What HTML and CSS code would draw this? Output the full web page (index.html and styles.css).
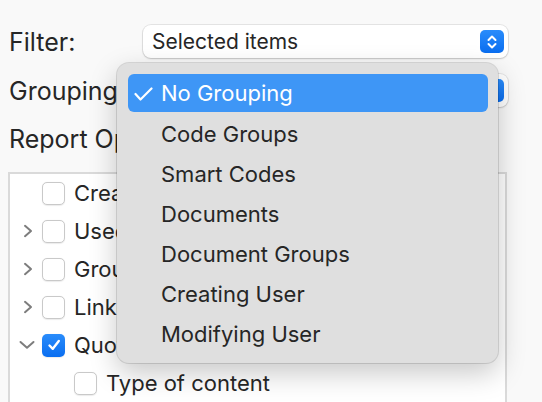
FILE: index.html
```html
<!DOCTYPE html>
<html>
<head>
<meta charset="utf-8">
<link rel="stylesheet" href="styles.css">
</head>
<body>
<div class="dialog">
  <div class="row">
    <div class="label">Filter:</div>
    <div class="popup">
      <span class="popup-text">Selected items</span>
      <span class="stepper">
        <svg width="12" height="16" viewBox="0 0 12 16"><path d="M2.5 6 L6 2.5 L9.5 6 M2.5 10 L6 13.5 L9.5 10" fill="none" stroke="#fff" stroke-width="2" stroke-linecap="round" stroke-linejoin="round"/></svg>
      </span>
    </div>
  </div>
  <div class="row row-grouping">
    <div class="label">Grouping:</div>
    <div class="popup">
      <span class="popup-text">No Grouping</span>
      <span class="stepper">
        <svg width="12" height="16" viewBox="0 0 12 16"><path d="M2.5 6 L6 2.5 L9.5 6 M2.5 10 L6 13.5 L9.5 10" fill="none" stroke="#fff" stroke-width="2" stroke-linecap="round" stroke-linejoin="round"/></svg>
      </span>
    </div>
  </div>
  <div class="section-label">Report Options:</div>
  <div class="tree">
    <div class="tree-row">
      <span class="disclosure"></span>
      <span class="checkbox"></span>
      <span class="tree-text">Created</span>
    </div>
    <div class="tree-row">
      <span class="disclosure"><svg width="12" height="14" viewBox="0 0 12 14"><path d="M3 1.8 L9 7 L3 12.2" fill="none" stroke="#7d7d7d" stroke-width="2" stroke-linecap="round" stroke-linejoin="round"/></svg></span>
      <span class="checkbox"></span>
      <span class="tree-text">Used Codes</span>
    </div>
    <div class="tree-row">
      <span class="disclosure"><svg width="12" height="14" viewBox="0 0 12 14"><path d="M3 1.8 L9 7 L3 12.2" fill="none" stroke="#7d7d7d" stroke-width="2" stroke-linecap="round" stroke-linejoin="round"/></svg></span>
      <span class="checkbox"></span>
      <span class="tree-text">Groups</span>
    </div>
    <div class="tree-row">
      <span class="disclosure"><svg width="12" height="14" viewBox="0 0 12 14"><path d="M3 1.8 L9 7 L3 12.2" fill="none" stroke="#7d7d7d" stroke-width="2" stroke-linecap="round" stroke-linejoin="round"/></svg></span>
      <span class="checkbox"></span>
      <span class="tree-text">Linked Memos</span>
    </div>
    <div class="tree-row">
      <span class="disclosure down"><svg width="16" height="10" viewBox="0 0 16 10"><path d="M1.5 2 L8 7.8 L14.5 2" fill="none" stroke="#7d7d7d" stroke-width="2" stroke-linecap="round" stroke-linejoin="round"/></svg></span>
      <span class="checkbox checked"><svg width="16" height="16" viewBox="0 0 16 16"><path d="M3.5 8.5 L6.8 11.8 L12.8 4" fill="none" stroke="#fff" stroke-width="2.4" stroke-linecap="round" stroke-linejoin="round"/></svg></span>
      <span class="tree-text">Quotations</span>
    </div>
    <div class="tree-row child">
      <span class="checkbox"></span>
      <span class="tree-text">Type of content</span>
    </div>
  </div>

  <div class="menu">
    <div class="menu-item selected"><svg class="check" width="19" height="14" viewBox="0 0 19 14"><path d="M1.5 7 L6.5 12.5 L17.5 1.5" fill="none" stroke="#fff" stroke-width="2.2" stroke-linecap="round" stroke-linejoin="round"/></svg>No Grouping</div>
    <div class="menu-item">Code Groups</div>
    <div class="menu-item">Smart Codes</div>
    <div class="menu-item">Documents</div>
    <div class="menu-item">Document Groups</div>
    <div class="menu-item">Creating User</div>
    <div class="menu-item">Modifying User</div>
  </div>
</div>
</body>
</html>
```

FILE: styles.css
```css
html, body {
  margin: 0;
  padding: 0;
  background: #f9f9f9;
  overflow: hidden;
}

body {
  width: 542px;
  height: 402px;
  font-family: "Inter", "Liberation Sans", sans-serif;
  font-size: 22px;
  color: #262626;
}

.dialog {
  position: relative;
  padding: 25px 0 0 9px;
}

.row {
  display: flex;
  align-items: center;
  height: 33px;
}

.row-grouping {
  margin-top: 16px;
}

.label {
  width: 134px;
  flex: none;
  font-size: 25px;
  white-space: nowrap;
}

.popup {
  box-sizing: border-box;
  width: 365px;
  height: 33px;
  background: #fff;
  border-radius: 8px;
  box-shadow: 0 0 0 1px rgba(0,0,0,0.08), 0 1px 2px rgba(0,0,0,0.15);
  display: flex;
  align-items: center;
  justify-content: space-between;
  padding: 0 4px 0 9px;
  font-size: 21px;
}

.stepper {
  width: 24px;
  height: 23px;
  border-radius: 5px;
  background: linear-gradient(#2a8cfb, #0a6ef0);
  display: flex;
  align-items: center;
  justify-content: center;
}

.section-label {
  margin-top: 18px;
  height: 28px;
  line-height: 28px;
  font-size: 25px;
  white-space: nowrap;
}

.tree {
  box-sizing: border-box;
  margin-top: 19px;
  margin-left: -1px;
  width: 499px;
  height: 260px;
  background: #fff;
  border: 2px solid #dadada;
  border-bottom: none;
}

.tree-row {
  display: flex;
  align-items: center;
  height: 38px;
}

.disclosure {
  width: 32px;
  flex: none;
  display: flex;
  justify-content: flex-end;
}

.disclosure svg {
  margin-right: 8px;
}

.disclosure.down svg {
  margin-right: 7px;
}

.checkbox {
  box-sizing: border-box;
  width: 23px;
  height: 23px;
  flex: none;
  border-radius: 5px;
  border: 1px solid #c9c9c9;
  background: #fff;
  box-shadow: 0 0.5px 1px rgba(0,0,0,0.08);
  display: flex;
  align-items: center;
  justify-content: center;
}

.checkbox.checked {
  border: none;
  background: linear-gradient(#2a8cfb, #0a6ef0);
}

.tree-text {
  margin-left: 9px;
  white-space: nowrap;
}

.tree-row.child {
  padding-left: 64px;
}

.menu {
  position: absolute;
  left: 117px;
  top: 63px;
  box-sizing: border-box;
  width: 381px;
  height: 300px;
  padding: 11px 10px 9px 11px;
  background: #dfdfdf;
  border-radius: 12px;
  box-shadow: 0 0 0 1px rgba(0,0,0,0.12), 0 10px 28px rgba(0,0,0,0.22);
}

.menu-item {
  height: 40px;
  line-height: 40px;
  padding-left: 33px;
  position: relative;
  white-space: nowrap;
}

.menu-item.selected {
  height: 38px;
  line-height: 38px;
  margin-bottom: 2px;
  background: #3e96f6;
  color: #fff;
  border-radius: 6px;
}

.check {
  position: absolute;
  left: 6px;
  top: 13px;
}
```
